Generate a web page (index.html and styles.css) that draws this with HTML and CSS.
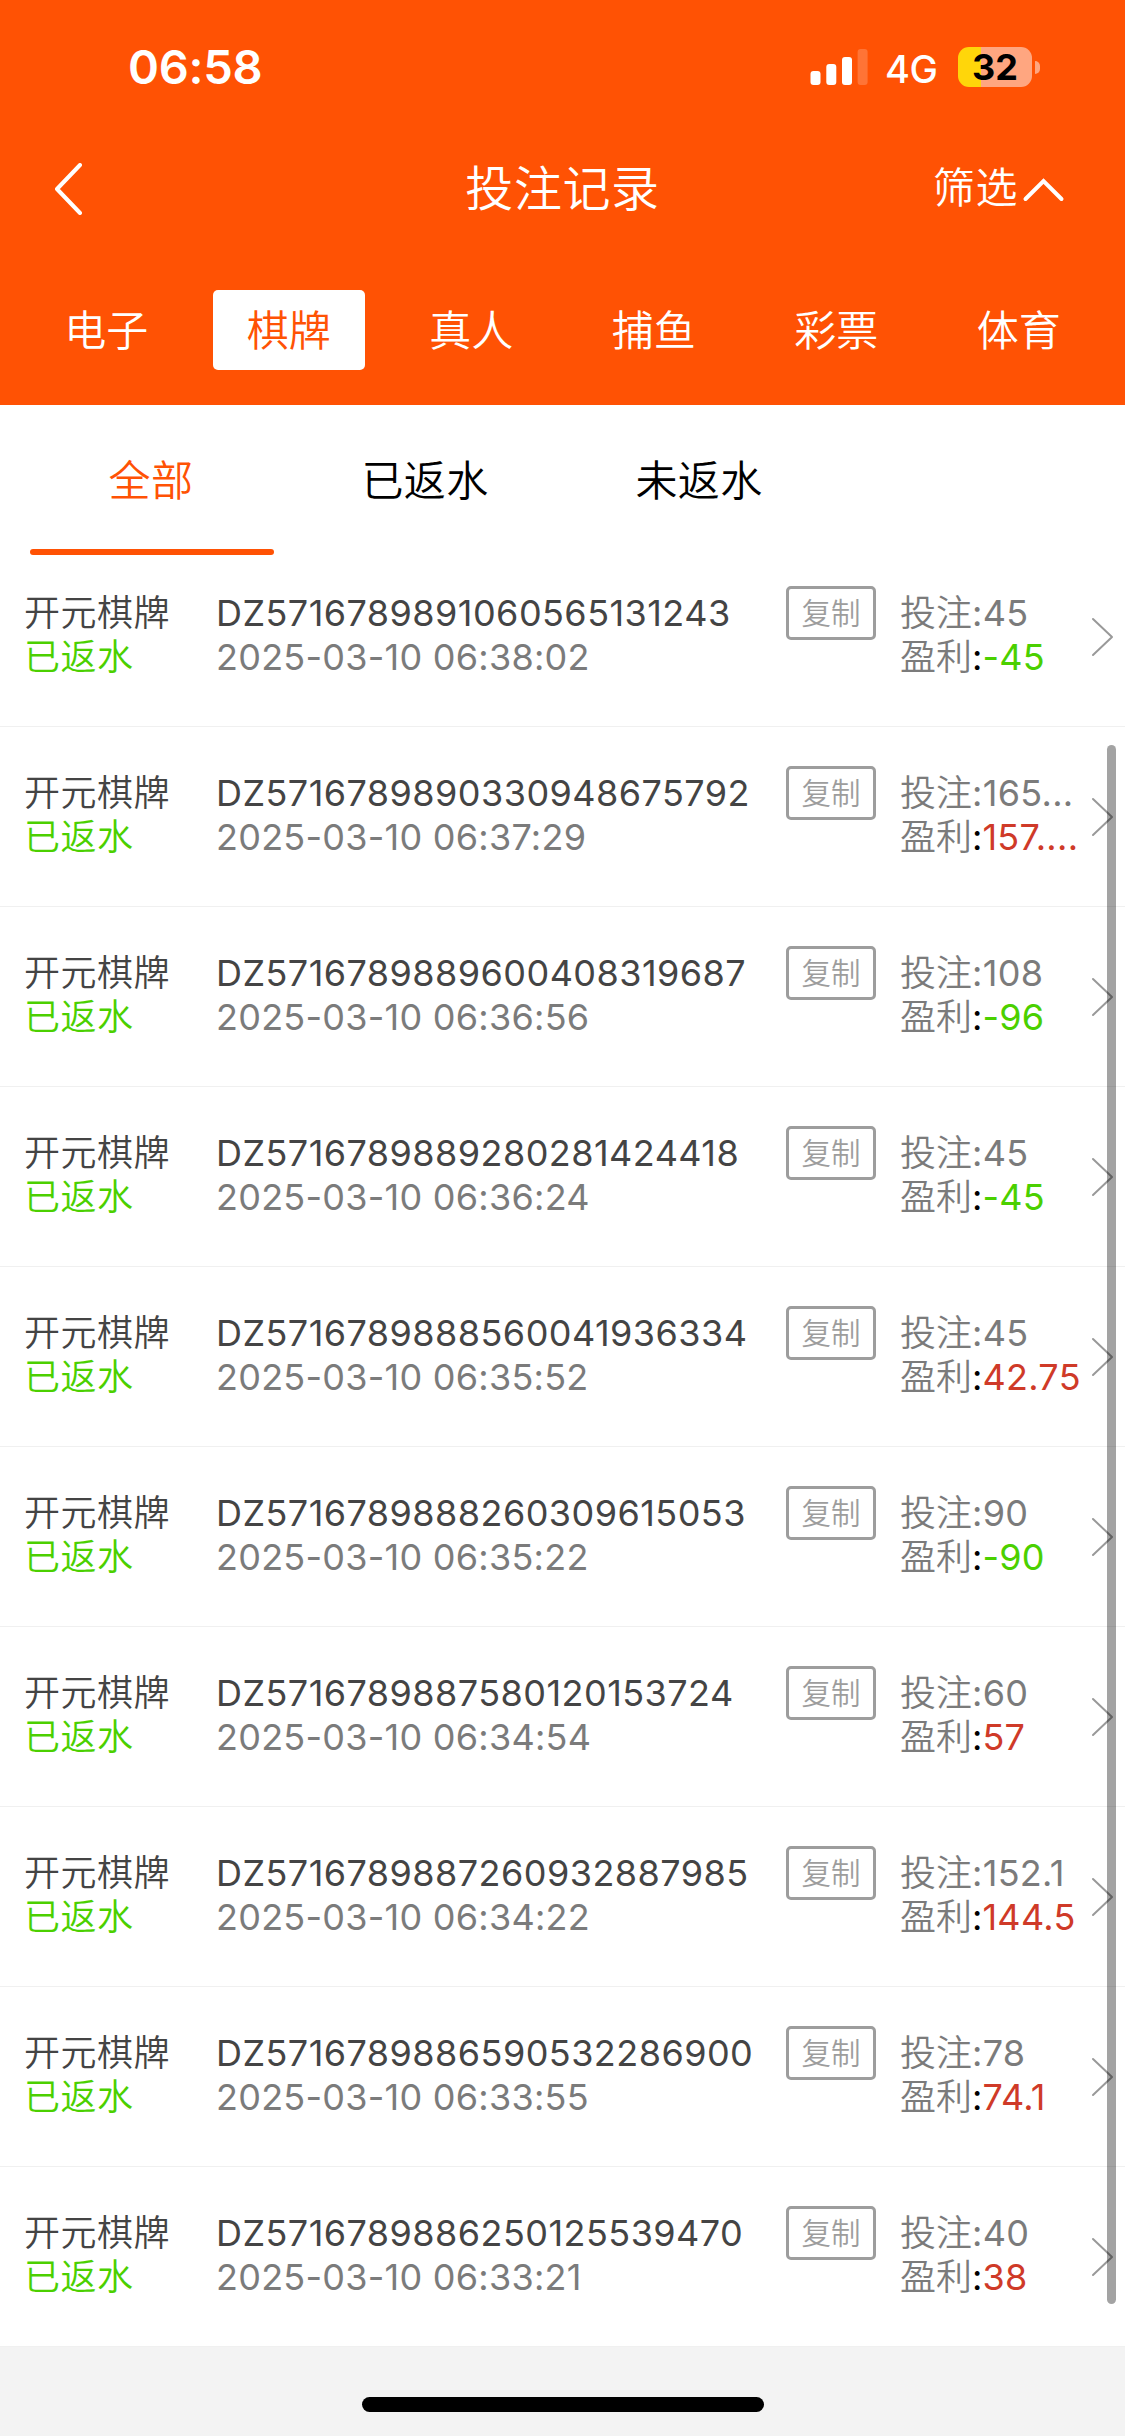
FILE: index.html
```
<!DOCTYPE html>
<html lang="zh-CN">
<head>
<meta charset="utf-8">
<title>投注记录</title>
<link rel="stylesheet" href="styles.css">
</head>
<body>
<header class="header">
  <div class="status">
    <span class="clock">06:58</span>
    <svg class="signal" width="58" height="38" viewBox="0 0 58 38" fill="#fff"><rect x="0.5" y="23" width="10" height="14" rx="3"/><rect x="16.3" y="16" width="10" height="21" rx="3"/><rect x="32" y="9" width="10" height="28" rx="3"/><rect x="47.6" y="1" width="10" height="36" rx="3" opacity=".2"/></svg>
    <span class="network">4G</span>
    <span class="battery">32</span>
    <span class="nub"></span>
  </div>
  <div class="navbar">
    <svg class="back" width="31" height="52" viewBox="0 0 31 52" fill="none" stroke="#fff" stroke-width="4" stroke-linecap="round" stroke-linejoin="round"><path d="M27 2L4 26L27 50"/></svg>
    <h1 class="title">投注记录</h1>
    <div class="filter">筛选<svg width="44" height="28" viewBox="0 0 44 28" fill="none" stroke="#fff" stroke-width="4" stroke-linecap="round" stroke-linejoin="miter"><path d="M4.500 24L22.500 6L40.500 24"/></svg></div>
  </div>
  <nav class="tabs">
    <span class="tab">电子</span><span class="tab active">棋牌</span><span class="tab">真人</span><span class="tab">捕鱼</span><span class="tab">彩票</span><span class="tab">体育</span>
  </nav>
</header>
<nav class="subtabs">
  <span class="subtab current">全部</span><span class="subtab">已返水</span><span class="subtab">未返水</span>
</nav>
<main class="list">
  <article class="row"><div class="game"><p>开元棋牌</p><p class="green">已返水</p></div><div class="order"><p class="id">DZ5716789891060565131243</p><p class="date">2025-03-10 06:38:02</p></div><span class="copy">复制</span><div class="money"><p>投注<i>:45</i></p><p>盈利<b>:</b><i class="green">-45</i></p></div><svg class="arrow" width="24" height="42" viewBox="0 0 24 42"><path d="M2 3L21 21L2 39"/></svg></article>
  <article class="row"><div class="game"><p>开元棋牌</p><p class="green">已返水</p></div><div class="order"><p class="id">DZ5716789890330948675792</p><p class="date">2025-03-10 06:37:29</p></div><span class="copy">复制</span><div class="money"><p>投注<i>:165...</i></p><p>盈利<b>:</b><i class="red">157....</i></p></div><svg class="arrow" width="24" height="42" viewBox="0 0 24 42"><path d="M2 3L21 21L2 39"/></svg></article>
  <article class="row"><div class="game"><p>开元棋牌</p><p class="green">已返水</p></div><div class="order"><p class="id">DZ5716789889600408319687</p><p class="date">2025-03-10 06:36:56</p></div><span class="copy">复制</span><div class="money"><p>投注<i>:108</i></p><p>盈利<b>:</b><i class="green">-96</i></p></div><svg class="arrow" width="24" height="42" viewBox="0 0 24 42"><path d="M2 3L21 21L2 39"/></svg></article>
  <article class="row"><div class="game"><p>开元棋牌</p><p class="green">已返水</p></div><div class="order"><p class="id">DZ5716789889280281424418</p><p class="date">2025-03-10 06:36:24</p></div><span class="copy">复制</span><div class="money"><p>投注<i>:45</i></p><p>盈利<b>:</b><i class="green">-45</i></p></div><svg class="arrow" width="24" height="42" viewBox="0 0 24 42"><path d="M2 3L21 21L2 39"/></svg></article>
  <article class="row"><div class="game"><p>开元棋牌</p><p class="green">已返水</p></div><div class="order"><p class="id">DZ5716789888560041936334</p><p class="date">2025-03-10 06:35:52</p></div><span class="copy">复制</span><div class="money"><p>投注<i>:45</i></p><p>盈利<b>:</b><i class="red">42.75</i></p></div><svg class="arrow" width="24" height="42" viewBox="0 0 24 42"><path d="M2 3L21 21L2 39"/></svg></article>
  <article class="row"><div class="game"><p>开元棋牌</p><p class="green">已返水</p></div><div class="order"><p class="id">DZ5716789888260309615053</p><p class="date">2025-03-10 06:35:22</p></div><span class="copy">复制</span><div class="money"><p>投注<i>:90</i></p><p>盈利<b>:</b><i class="green">-90</i></p></div><svg class="arrow" width="24" height="42" viewBox="0 0 24 42"><path d="M2 3L21 21L2 39"/></svg></article>
  <article class="row"><div class="game"><p>开元棋牌</p><p class="green">已返水</p></div><div class="order"><p class="id">DZ5716789887580120153724</p><p class="date">2025-03-10 06:34:54</p></div><span class="copy">复制</span><div class="money"><p>投注<i>:60</i></p><p>盈利<b>:</b><i class="red">57</i></p></div><svg class="arrow" width="24" height="42" viewBox="0 0 24 42"><path d="M2 3L21 21L2 39"/></svg></article>
  <article class="row"><div class="game"><p>开元棋牌</p><p class="green">已返水</p></div><div class="order"><p class="id">DZ5716789887260932887985</p><p class="date">2025-03-10 06:34:22</p></div><span class="copy">复制</span><div class="money"><p>投注<i>:152.1</i></p><p>盈利<b>:</b><i class="red">144.5</i></p></div><svg class="arrow" width="24" height="42" viewBox="0 0 24 42"><path d="M2 3L21 21L2 39"/></svg></article>
  <article class="row"><div class="game"><p>开元棋牌</p><p class="green">已返水</p></div><div class="order"><p class="id">DZ5716789886590532286900</p><p class="date">2025-03-10 06:33:55</p></div><span class="copy">复制</span><div class="money"><p>投注<i>:78</i></p><p>盈利<b>:</b><i class="red">74.1</i></p></div><svg class="arrow" width="24" height="42" viewBox="0 0 24 42"><path d="M2 3L21 21L2 39"/></svg></article>
  <article class="row"><div class="game"><p>开元棋牌</p><p class="green">已返水</p></div><div class="order"><p class="id">DZ5716789886250125539470</p><p class="date">2025-03-10 06:33:21</p></div><span class="copy">复制</span><div class="money"><p>投注<i>:40</i></p><p>盈利<b>:</b><i class="red">38</i></p></div><svg class="arrow" width="24" height="42" viewBox="0 0 24 42"><path d="M2 3L21 21L2 39"/></svg></article>
  <div class="scrollbar"></div>
</main>
<footer class="footer"><div class="home"></div></footer>
</body>
</html>
```
FILE: styles.css
```
* { box-sizing: border-box; margin: 0; padding: 0; }
body {
  width: 1125px;
  height: 2436px;
  overflow: hidden;
  display: flex;
  flex-direction: column;
  background: #fff;
  color: #000;
  font-family: Inter, "Noto Sans CJK SC", sans-serif;
  font-weight: 350;
}
.header { height: 405px; background: #ff5204; color: #fff; }
.status { height: 132px; padding: 2px 85px 0 128px; display: flex; align-items: center; }
.clock { font-size: 47px; font-weight: 600; line-height: 60px; letter-spacing: -0.3px; flex: 1; }
.signal { margin-right: 17px; }
.network { width: 73px; font-size: 38px; font-weight: 500; line-height: 48px; letter-spacing: -0.5px; padding-top: 3px; }
.battery {
  width: 74px;
  height: 40px;
  border-radius: 11px;
  background: linear-gradient(90deg, #ffd60a 23px, #ffa680 23px);
  color: #000;
  font-size: 36px;
  font-weight: 700;
  line-height: 40px;
  text-align: center;
}
.nub { width: 5px; height: 13px; margin-left: 3px; border-radius: 0 5px 5px 0; background: #ffa680; }
.navbar { height: 114px; display: grid; grid-template-columns: 1fr auto 1fr; align-items: center; padding: 0 60px 0 53px; }
.title { padding-left: 7px; font-size: 48px; font-weight: 350; letter-spacing: 0.6px; line-height: 60px; }
.filter { justify-self: end; display: flex; align-items: center; font-size: 42px; line-height: 58px; letter-spacing: 0.6px; padding-bottom: 2px; }
.filter svg { margin: 2px 0 0 3px; }
.tabs { padding: 44px 15px 0; display: grid; grid-template-columns: repeat(6, 1fr); justify-items: center; }
.tab { width: 152px; height: 80px; border-radius: 5px; font-size: 42px; line-height: 82px; text-align: center; }
.active { background: #fff; color: #ff5204; }
.subtabs { height: 150px; padding-left: 14px; display: flex; }
.subtab { width: 274px; font-size: 42px; line-height: 152px; letter-spacing: 0.4px; text-align: center; }
.current { height: 150px; display: flex; flex-direction: column; align-items: center; color: #ff5204; }
.current::after { content: ""; width: 244px; height: 6px; margin-top: -8px; border-radius: 3px; background: #ff5204; transform: translateX(1px); }
.list { position: relative; height: 1791px; }
.row {
  height: 180px;
  padding: 44px 12px 0 24px;
  border-bottom: 1px solid #f0f0f0;
  display: grid;
  grid-template-columns: 192px 570px 114px 191px 24px;
  align-items: start;
  font-size: 36px;
  line-height: 44px;
  color: #7b7b7b;
  white-space: nowrap;
}
.row:first-child { height: 172px; padding-top: 36px; }
.game, .id { color: #444; }
.game { letter-spacing: 0.5px; }
.order, i, b { font-weight: 400; font-style: normal; }
.id { letter-spacing: 0.45px; }
.date { letter-spacing: 0.25px; }
i { letter-spacing: 0.3px; }
.green, .game .green { color: #4bd000; }
.red { color: #cf3a28; }
b { color: #000; }
.copy {
  width: 90px;
  height: 54px;
  margin-top: -5px;
  border: 3px solid #9d9d9d;
  border-radius: 5px;
  color: #9d9d9d;
  font-size: 29.500px;
  line-height: 48px;
  text-align: center;
}
.arrow { margin-top: 25px; fill: none; stroke: #999; stroke-width: 2; stroke-linecap: round; stroke-linejoin: round; }
.scrollbar { position: absolute; top: 190px; right: 9px; width: 9px; height: 1559px; border-radius: 5px; background: rgba(0, 0, 0, 0.36); }
.footer { flex: 1; background: #f3f3f3; display: flex; justify-content: center; align-items: flex-start; padding-top: 51px; }
.home { width: 402px; height: 15px; border-radius: 8px; background: #000; }
```
